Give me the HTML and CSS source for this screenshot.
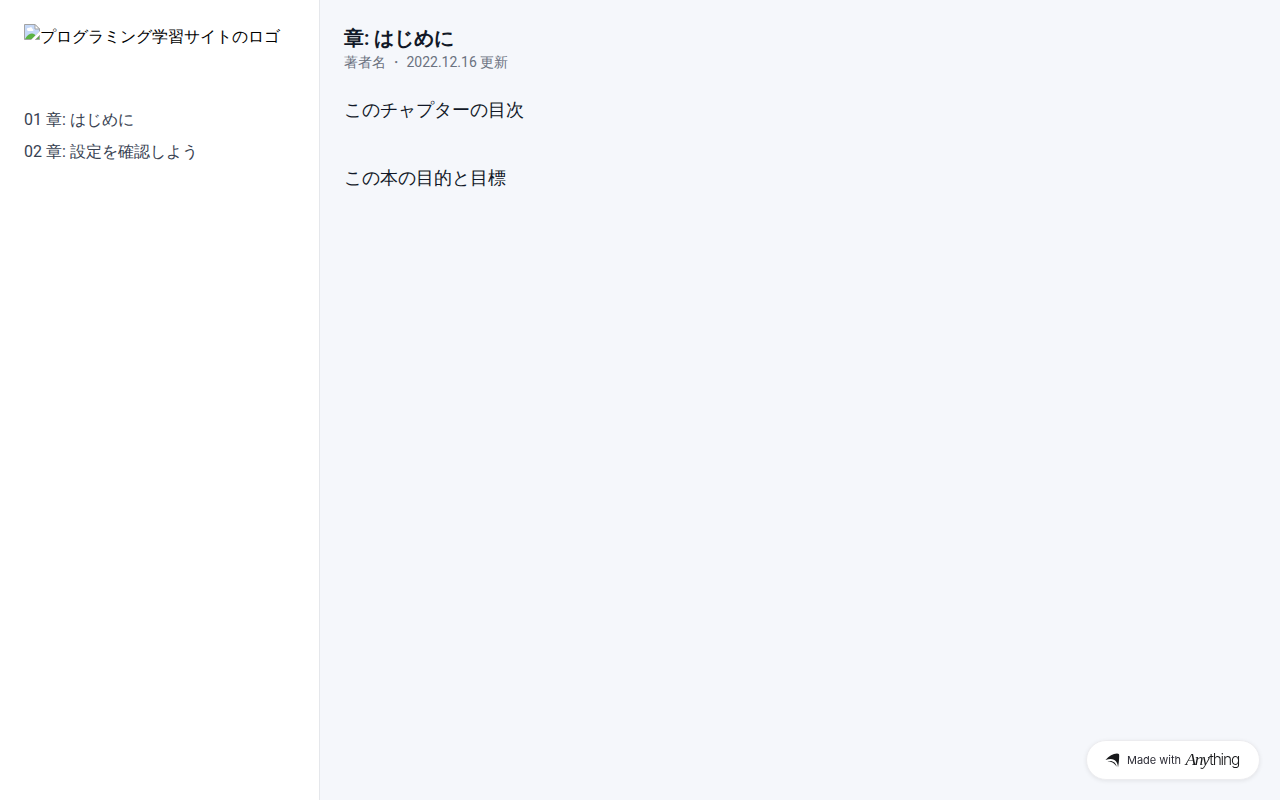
FILE: index.html
```html
<!DOCTYPE html>
<html lang="ja">
  <head>
    <meta charset="UTF-8" />
    <meta name="viewport" content="width=device-width, initial-scale=1.0" />
    <title>章: はじめに</title>
    <link rel="stylesheet" href="styles.css">
  </head>
  <body>
    <div class="layout">
      <aside class="sidebar">
        <div class="logo">
          <svg class="logo-icon" width="16" height="16" viewBox="0 0 16 16">
            <path d="M0.5 0.5H11L15.5 5V8L8 15.5H0.5Z" fill="#c5d8f7" stroke="#a3a3a3" />
            <path d="M3 6a1.5 1.5 0 0 1 2-2 2 2 0 0 1 3.5 1A1 1 0 0 1 8.5 7H4Z" fill="#fff" />
            <path d="M1 15C3 11 6 9.5 8 9.5s3 1 3.5 2L8 15Z" fill="#5bb344" />
            <path d="M11 0.5V5H15.5Z" fill="#fff" stroke="#a3a3a3" />
            <path d="M7 16L16 7V9.5L9.5 16Z" fill="#fff" />
            <path d="M11.5 15.5L15.5 11.5V15.5Z" fill="#5bb344" stroke="#a3a3a3" />
          </svg><span class="logo-text">プログラミング学習サイトのロゴ</span>
        </div>
        <nav class="chapters">
          <a href="#">01 章: はじめに</a>
          <a href="#">02 章: 設定を確認しよう</a>
        </nav>
      </aside>
      <main class="content">
        <h1>章: はじめに</h1>
        <p class="meta"><span class="author">著者名 ・ </span>2022.12.16 更新</p>
        <h2>このチャプターの目次</h2>
        <h2>この本の目的と目標</h2>
      </main>
    </div>

    <a class="badge" href="#">
      <svg class="badge-icon" width="15" height="15" viewBox="0 0 15 15" fill="#18191b">
        <path d="M0.5 7C4 3 8 0.5 12 0.5C13.8 0.5 14.3 1.2 14.2 3C14.1 7 13.8 10.5 13 14.5C12.8 8 9 4 0.5 7Z" />
        <path d="M2.5 8.2C8 7.2 11 9.8 11.7 13.8C10 11 8.3 9.9 6.8 9.2C5.5 8.7 4 8.3 2.5 8.2Z" />
      </svg>
      <span class="badge-text">Made with</span>
      <span class="badge-brand"><i>Any</i><b>thing</b></span>
    </a>
  </body>
</html>
```
FILE: styles.css
```css
body {
  margin: 0;
  font-family: Roboto, sans-serif;
  font-size: 16px;
  line-height: 24px;
  color: #000;
}

a {
  color: inherit;
  text-decoration: none;
}

.layout {
  display: flex;
  min-height: 100vh;
  background-color: #f5f7fb;
}

.sidebar {
  box-sizing: border-box;
  width: 320px;
  padding: 24px;
  background-color: #fff;
  border-right: 1px solid #e5e7eb;
}

.logo {
  display: flex;
  height: 48px;
  margin-bottom: 32px;
  white-space: nowrap;
}

.logo-icon {
  flex: none;
}

.logo-text {
  padding-top: 1px;
}

.chapters {
  display: flex;
  flex-direction: column;
  gap: 8px;
  padding-top: 4px;
  color: #374151;
}

.content {
  flex: 1;
  padding: 24px;
  color: #111827;
}

h1 {
  margin: 0;
  font-size: 20px;
  line-height: 28px;
  font-weight: 600;
}

.meta {
  margin: 0 0 24px;
  font-size: 14px;
  line-height: 20px;
  color: #6b7280;
}

.author {
  margin-right: -0.5px;
}

h2 {
  margin: 0 0 40px;
  font-size: 18px;
  line-height: 28px;
  font-weight: 400;
}

.badge {
  position: fixed;
  right: 20px;
  bottom: 20px;
  display: flex;
  align-items: center;
  box-sizing: border-box;
  width: 174px;
  height: 40px;
  padding-left: 18px;
  background-color: #fff;
  border: 1px solid #ececef;
  border-radius: 20px;
  box-shadow: 0 1px 4px rgba(0, 0, 0, 0.08);
  color: #18191b;
  white-space: nowrap;
}

.badge-icon {
  flex: none;
  margin-right: 7px;
}

.badge-text {
  width: 58.5px;
  font-family: Inter, sans-serif;
  font-size: 11px;
  color: #2b2b35;
}

.badge-brand {
  display: flex;
  align-items: baseline;
  margin-top: -1px;
}

.badge-brand i {
  font-family: "Liberation Serif", serif;
  font-size: 17.5px;
  letter-spacing: -1.5px;
}

.badge-brand b {
  margin-left: 1px;
  font-family: Inter, sans-serif;
  font-size: 15.5px;
  font-weight: 300;
  letter-spacing: -1.2px;
}
```
